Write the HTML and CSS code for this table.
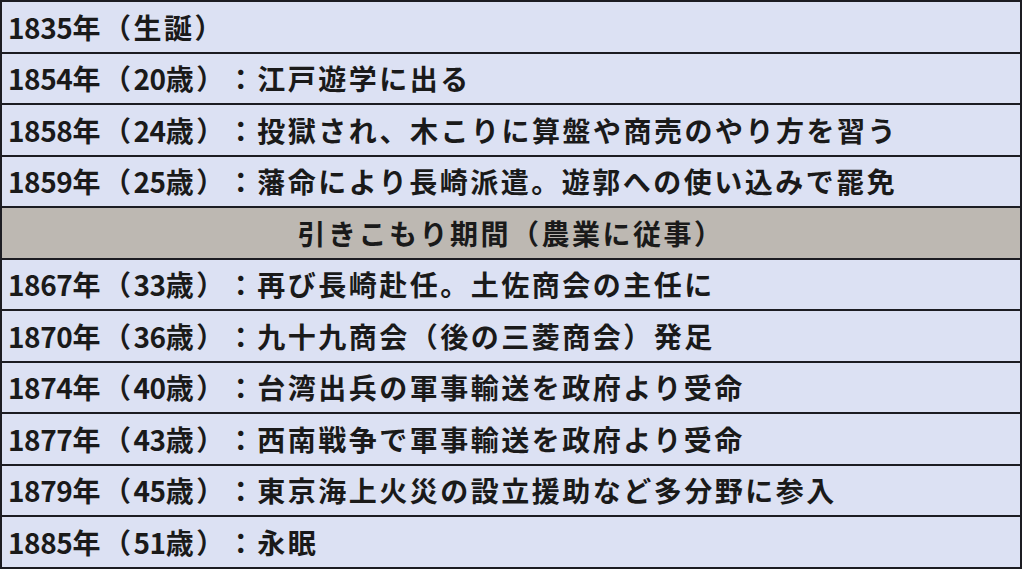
FILE: index.html
```html
<!DOCTYPE html>
<html lang="ja">
<head>
<meta charset="utf-8">
<link rel="stylesheet" href="styles.css">
</head>
<body>
<div class="table">
  <div class="row"><span class="num">1835</span>年（生誕）</div>
  <div class="row"><span class="num">1854</span>年（<span class="num">20</span>歳）：江戸遊学に出る</div>
  <div class="row"><span class="num">1858</span>年（<span class="num">24</span>歳）：投獄され、木こりに算盤や商売のやり方を習う</div>
  <div class="row"><span class="num">1859</span>年（<span class="num">25</span>歳）：藩命により長崎派遣。遊郭への使い込みで罷免</div>
  <div class="row sep">引きこもり期間（農業に従事）</div>
  <div class="row"><span class="num">1867</span>年（<span class="num">33</span>歳）：再び長崎赴任。土佐商会の主任に</div>
  <div class="row"><span class="num">1870</span>年（<span class="num">36</span>歳）：九十九商会（後の三菱商会）発足</div>
  <div class="row"><span class="num">1874</span>年（<span class="num">40</span>歳）：台湾出兵の軍事輸送を政府より受命</div>
  <div class="row"><span class="num">1877</span>年（<span class="num">43</span>歳）：西南戦争で軍事輸送を政府より受命</div>
  <div class="row"><span class="num">1879</span>年（<span class="num">45</span>歳）：東京海上火災の設立援助など多分野に参入</div>
  <div class="row"><span class="num">1885</span>年（<span class="num">51</span>歳）：永眠</div>
</div>
</body>
</html>
```
FILE: styles.css
```css
html, body {
  margin: 0;
  padding: 0;
  background: #ffffff;
}
.table {
  width: 1022px;
  box-sizing: border-box;
  border: 2px solid #1c1c22;
  border-bottom: none;
  display: flex;
  flex-direction: column;
  font-family: "Noto Sans CJK JP", "Noto Sans", sans-serif;
  font-weight: 700;
  font-size: 28px;
  letter-spacing: 2.5px;
  text-spacing-trim: space-all;
  color: #1a1a1a;
}
.row {
  height: 49.5px;
  border-bottom: 2px solid #1c1c22;
  background: #dce1f3;
  display: flex;
  align-items: center;
  padding-left: 6px;
  white-space: nowrap;
  line-height: 1;
}
.num {
  letter-spacing: -0.4px;
}
.sep {
  background: #bdb8b2;
  justify-content: center;
  padding-left: 0;
}
```
